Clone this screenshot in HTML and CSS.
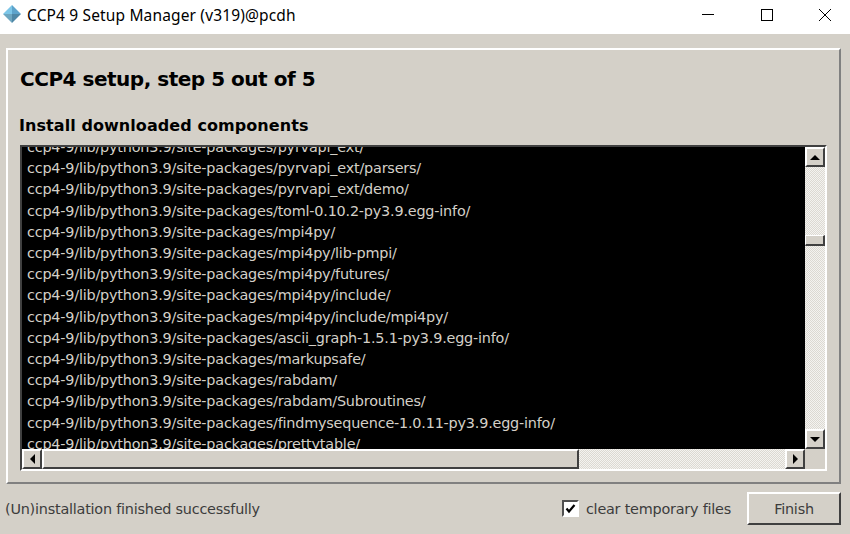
FILE: index.html
```html
<!DOCTYPE html>
<html lang="en">
<head>
<meta charset="utf-8">
<title>CCP4 9 Setup Manager</title>
<link rel="stylesheet" href="styles.css">
</head>
<body>
<div class="window">
  <header class="titlebar">
    <svg class="app-icon" width="18" height="18" viewBox="0 0 18 18">
      <polygon points="9,0 18,9 9,9" fill="#5da3cb"/>
      <polygon points="9,0 0,9 9,9" fill="#7cc6e8"/>
      <polygon points="0,9 9,18 9,9" fill="#6ea6c0"/>
      <polygon points="18,9 9,18 9,9" fill="#4f87a6"/>
    </svg>
    <span class="title">CCP4 9 Setup Manager (v319)@pcdh</span>
    <div class="controls">
      <svg class="ctl" width="12" height="12" viewBox="0 0 12 12"><path d="M0 5.5H12" stroke="#000" fill="none"/></svg>
      <svg class="ctl" width="12" height="12" viewBox="0 0 12 12"><rect x="0.5" y="0.5" width="11" height="11" stroke="#000" fill="none"/></svg>
      <svg class="ctl" width="12" height="12" viewBox="0 0 12 12"><path d="M0 0L12 12M12 0L0 12" stroke="#000" fill="none"/></svg>
    </div>
  </header>
  <main class="body">
    <section class="frame">
      <h1 class="step">CCP4 setup, step 5 out of 5</h1>
      <h2 class="sub">Install downloaded components</h2>
      <div class="view">
        <div class="view-grid">
          <div class="log">
            <div class="lines">
              <div>ccp4-9/lib/python3.9/site-packages/pyrvapi_ext/</div>
              <div>ccp4-9/lib/python3.9/site-packages/pyrvapi_ext/parsers/</div>
              <div>ccp4-9/lib/python3.9/site-packages/pyrvapi_ext/demo/</div>
              <div>ccp4-9/lib/python3.9/site-packages/toml-0.10.2-py3.9.egg-info/</div>
              <div>ccp4-9/lib/python3.9/site-packages/mpi4py/</div>
              <div>ccp4-9/lib/python3.9/site-packages/mpi4py/lib-pmpi/</div>
              <div>ccp4-9/lib/python3.9/site-packages/mpi4py/futures/</div>
              <div>ccp4-9/lib/python3.9/site-packages/mpi4py/include/</div>
              <div>ccp4-9/lib/python3.9/site-packages/mpi4py/include/mpi4py/</div>
              <div>ccp4-9/lib/python3.9/site-packages/ascii_graph-1.5.1-py3.9.egg-info/</div>
              <div>ccp4-9/lib/python3.9/site-packages/markupsafe/</div>
              <div>ccp4-9/lib/python3.9/site-packages/rabdam/</div>
              <div>ccp4-9/lib/python3.9/site-packages/rabdam/Subroutines/</div>
              <div>ccp4-9/lib/python3.9/site-packages/findmysequence-1.0.11-py3.9.egg-info/</div>
              <div>ccp4-9/lib/python3.9/site-packages/prettytable/</div>
            </div>
          </div>
          <div class="vbar">
            <div class="sb-btn"><span class="tri tri-up"></span></div>
            <div class="v-before"></div>
            <div class="v-thumb"></div>
            <div class="track"></div>
            <div class="sb-btn"><span class="tri tri-down"></span></div>
          </div>
          <div class="hbar">
            <div class="sb-btn"><span class="tri tri-left"></span></div>
            <div class="h-thumb"></div>
            <div class="track"></div>
            <div class="sb-btn"><span class="tri tri-right"></span></div>
          </div>
        </div>
      </div>
    </section>
    <footer class="footer">
      <span class="status">(Un)installation finished successfully</span>
      <label class="check">
        <span class="box">
          <svg width="11" height="11" viewBox="0 0 11 11"><path d="M1.5 5.5L4 8.5L9.5 2" stroke="#000" stroke-width="2.2" fill="none"/></svg>
        </span>
        <span class="check-label">clear temporary files</span>
      </label>
      <button class="finish">Finish</button>
    </footer>
  </main>
</div>
</body>
</html>
```
FILE: styles.css
```css
* { box-sizing: border-box; }
html, body { margin: 0; height: 100%; }
body { font-family: "DejaVu Sans", sans-serif; overflow: hidden; }
.window { width: 850px; height: 534px; display: flex; flex-direction: column; background: #d4d0c8; }

.titlebar { height: 34px; flex: none; background: #fff; display: flex; align-items: center; padding: 0 19px 6px 3px; }
.app-icon { flex: none; margin-right: 6px; }
.title { font-family: "Noto Sans", sans-serif; font-size: 15.5px; line-height: 20px; color: #000; letter-spacing: 0.15px; margin-top: 2px; }
.controls { margin-left: auto; display: flex; gap: 46.5px; margin-top: 2px; }
.ctl { display: block; flex: none; }

.body { flex: 1; display: flex; flex-direction: column; padding: 14px 9px 9px 6px; }
.frame { height: 436px; flex: none; border: 2px solid; border-color: #fff #808080 #808080 #fff; padding: 0 12px; display: flex; flex-direction: column; }
.step { margin: 16px 0 0; font-size: 20px; line-height: 26px; font-weight: 700; color: #000; letter-spacing: -0.48px; }
.sub { margin: 23px 0 0 -1px; font-size: 16px; line-height: 22px; font-weight: 700; color: #000; letter-spacing: 0.07px; }
.view { margin-top: 8px; width: 807px; height: 326px; border: 2px solid; border-color: #404040 #fff #fff #404040; }
.view-grid { display: grid; grid-template-columns: 1fr 20px; grid-template-rows: 1fr 20px; height: 100%; }

.log { background: #000; overflow: hidden; }
.lines { margin-top: -10px; padding-left: 5px; color: #d4d0c8; font-size: 14.4px; letter-spacing: -0.2px; line-height: 21.2px; white-space: nowrap; }

.vbar { display: flex; flex-direction: column; grid-row: 1; grid-column: 2; }
.hbar { display: flex; grid-row: 2; grid-column: 1; }
.sb-btn { flex: none; width: 20px; height: 20px; background: #d4d0c8; border: 2px solid; border-color: #fff #404040 #404040 #fff; display: flex; align-items: center; justify-content: center; }
.track, .v-before { background: repeating-conic-gradient(#dcd9d2 0 25%, #f4f3f0 0 50%) 0 0 / 2px 2px; }
.track { flex: 1; }
.v-before { flex: none; height: 68px; }
.v-thumb { flex: none; height: 11px; background: #d4d0c8; border: solid; border-color: #fff #404040 #404040 #fff; border-width: 1px 2px 2px 1px; }
.h-thumb { flex: none; width: 537px; background: #d4d0c8; border: 2px solid; border-color: #fff #404040 #404040 #fff; }

.tri { width: 0; height: 0; border-style: solid; border-color: transparent; }
.tri-up { border-width: 0 5px 5px; border-bottom-color: #000; }
.tri-down { border-width: 5px 5px 0; border-top-color: #000; }
.tri-left { border-width: 5px 5px 5px 0; border-right-color: #000; }
.tri-right { border-width: 5px 0 5px 5px; border-left-color: #000; }

.footer { flex: 1; display: flex; align-items: center; font-size: 14.4px; letter-spacing: -0.22px; color: #3c3c3c; padding-top: 8px; }
.status { margin-left: -1px; }
.check { margin-left: auto; display: flex; align-items: center; gap: 7px; }
.box { width: 17px; height: 17px; margin-top: -1px; background: #fff; border: 2px solid; border-color: #505050 #fff #fff #505050; display: flex; align-items: center; justify-content: center; }
.finish { margin-left: 16px; width: 94px; height: 33px; font: inherit; letter-spacing: inherit; color: #3c3c3c; background: #d4d0c8; border: 2px solid; border-color: #fff #404040 #404040 #fff; padding: 0; }
```
